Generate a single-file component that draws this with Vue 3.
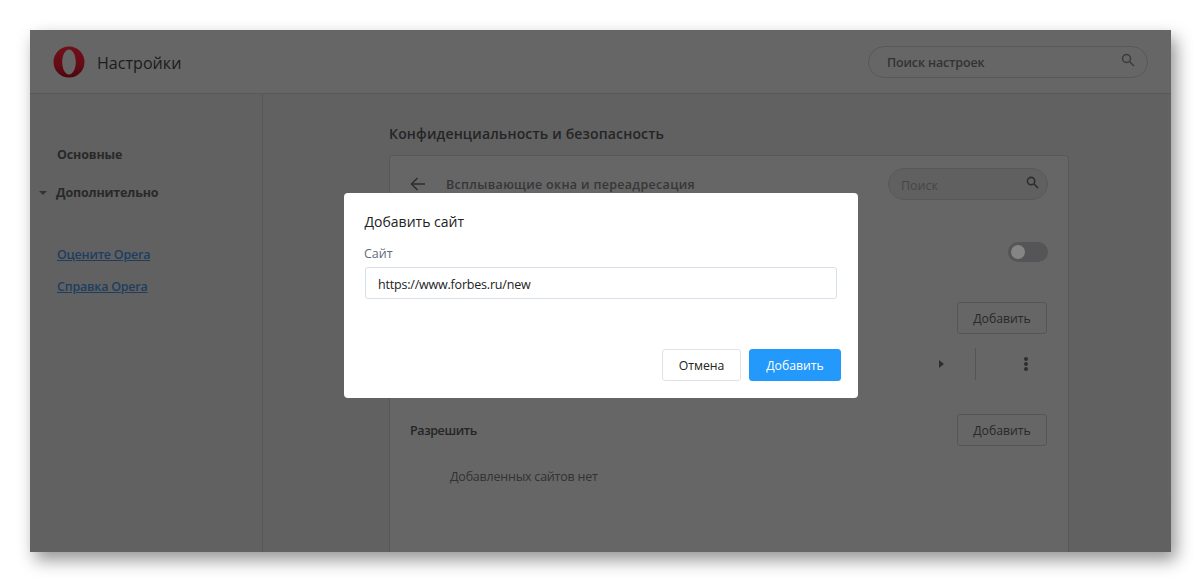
<script setup>
const navLinks = ['Оцените Opera', 'Справка Opera']
</script>

<template>
  <div class="page">
    <div class="window">
      <header class="topbar">
        <svg class="logo" width="32" height="32" viewBox="0 0 32 32">
          <defs>
            <linearGradient id="og" x1="0" y1="0" x2="0" y2="1">
              <stop offset="0" stop-color="#701019" />
              <stop offset="0.6" stop-color="#650c15" />
              <stop offset="1" stop-color="#4a060e" />
            </linearGradient>
          </defs>
          <path fill="url(#og)" fill-rule="evenodd" d="M16 .5a15.500 15.500 0 1 0 0 31 15.500 15.500 0 0 0 0-31zm0 3c3.800 0 6.800 5.600 6.800 12.500S19.800 28.500 16 28.500 9.200 22.900 9.200 16 12.200 3.500 16 3.500z" />
        </svg>
        <span class="app-title">Настройки</span>
        <div class="pill top-search">
          <span>Поиск настроек</span>
          <svg width="14" height="14" viewBox="0 0 14 14" fill="none" stroke="#8f9297" stroke-width="1.5"><circle cx="5.500" cy="5.500" r="4" /><path d="M8.500 8.500 13 13" /></svg>
        </div>
      </header>

      <div class="body">
        <aside class="sidebar">
          <div class="nav-item first">Основные</div>
          <div class="nav-item adv"><i class="caret"></i>Дополнительно</div>
          <div class="links">
            <a v-for="l in navLinks" :key="l" class="link">{{ l }}</a>
          </div>
        </aside>

        <main class="content">
          <h2 class="section">Конфиденциальность и безопасность</h2>
          <section class="card">
            <div class="card-head">
              <svg class="back" width="16" height="14" viewBox="0 0 16 14" fill="none" stroke="#707276" stroke-width="1.500"><path d="M15 7H1.500M7.500 1 1.500 7l6 6" /></svg>
              <span class="card-title">Всплывающие окна и переадресация</span>
              <div class="pill card-search">
                <span>Поиск</span>
                <svg width="13" height="13" viewBox="0 0 14 14" fill="none" stroke="#707276" stroke-width="1.700"><circle cx="5.500" cy="5.500" r="4" /><path d="M8.500 8.500 13 13" /></svg>
              </div>
            </div>
            <div class="row toggle-row">
              <div class="toggle"><i></i></div>
            </div>
            <div class="row add-row">
              <button class="ghost">Добавить</button>
            </div>
            <div class="row site-row">
              <i class="arrow"></i>
              <i class="divider"></i>
              <span class="dots"><i></i><i></i><i></i></span>
            </div>
            <div class="row allow-row">
              <span class="allow">Разрешить</span>
              <button class="ghost">Добавить</button>
            </div>
            <div class="empty">Добавленных сайтов нет</div>
          </section>
        </main>
        <div class="scroll"></div>
      </div>

      <div class="overlay">
        <div class="dialog">
          <div class="d-title">Добавить сайт</div>
          <label class="d-label">Сайт</label>
          <div class="d-input">https://www.forbes.ru/new</div>
          <div class="d-actions">
            <button class="btn cancel">Отмена</button>
            <button class="btn primary">Добавить</button>
          </div>
        </div>
      </div>
    </div>
  </div>
</template>

<style>
html, body { margin: 0; background: #fff; }
</style>

<style scoped>
* { box-sizing: border-box; }
.page {
  width: 1201px;
  height: 582px;
  padding: 30px;
  overflow: hidden;
  background: #fff;
  font-family: "Open Sans", "Noto Sans", sans-serif;
}
.window {
  position: relative;
  width: 1141px;
  height: 522px;
  display: flex;
  flex-direction: column;
  background: #f2f3f6;
  box-shadow: 5px 8px 16px rgba(0, 0, 0, .42);
}
.topbar {
  height: 64px;
  flex: none;
  display: flex;
  align-items: center;
  padding-left: 23px;
  background: #fff;
  border-bottom: 1px solid #dcdfe4;
}
.logo { flex: none; margin-top: 1px; position: relative; z-index: 1; }
.app-title { margin: 2px 0 0 12px; font-size: 16.100px; color: #4a4a4a; }
.pill {
  display: flex;
  align-items: center;
  justify-content: space-between;
  border: 1px solid #dadce0;
  border-radius: 16px;
  height: 32px;
}
.top-search {
  width: 280px;
  margin-left: auto;
  margin-right: 23px;
  padding: 0 12px 0 18px;
  font-size: 12.500px;
  font-weight: 600;
  letter-spacing: -.15px;
  color: #7c7f86;
}
.top-search span { margin-top: 2px; }
.top-search svg { margin-top: -4px; }
.body { flex: 1; display: flex; min-height: 0; position: relative; }
.sidebar {
  width: 233px;
  flex: none;
  border-right: 1px solid #d4d9e1;
  padding: 51px 0 0 27px;
}
.nav-item { font-size: 12.500px; font-weight: 700; letter-spacing: -.17px; color: #666; line-height: 20px; }
.adv { margin-top: 18px; position: relative; margin-left: -1px; }
.caret {
  position: absolute;
  left: -17px;
  top: 8px;
  border-left: 4px solid transparent;
  border-right: 4px solid transparent;
  border-top: 4px solid #808080;
}
.links { margin-top: 42px; display: flex; flex-direction: column; gap: 12px; }
.link { font-size: 12.500px; font-weight: 600; letter-spacing: -.23px; line-height: 20px; color: #4f9cec; text-decoration: underline; }
.content { flex: 1; padding: 30px 0 0 126px; }
.section { margin: 0; font-size: 14px; font-weight: 600; line-height: 20px; color: #5c5c5c; letter-spacing: .16px; }
.card {
  width: 680px;
  height: 397px;
  margin-top: 11px;
  background: #fff;
  border: 1px solid #dcdde0;
  border-bottom: 0;
  border-radius: 4px 4px 0 0;
  padding: 12px 20px 0 20px;
}
.card-head { display: flex; align-items: center; height: 32px; }
.back { margin-right: 20px; }
.card-title { font-size: 12.500px; font-weight: 600; color: #8a8a8a; letter-spacing: .32px; }
.card-search {
  width: 160px;
  margin-left: auto;
  padding: 0 8px 0 12px;
  font-size: 12.500px;
  background: #f0f1f3;
  color: #acafb4;
}
.card-search span { margin-top: 2px; }
.card-search svg { margin-top: -4px; }
.row { display: flex; align-items: center; justify-content: flex-end; }
.toggle-row { margin-top: 42px; height: 20px; }
.toggle { width: 40px; height: 20px; border-radius: 10px; background: #555558; padding: 3px; position: relative; z-index: 1; }
.toggle i { display: block; width: 14px; height: 14px; border-radius: 50%; background: #858585; }
.add-row { margin-top: 40px; height: 32px; }
.ghost {
  width: 90px;
  height: 32px;
  margin: 0 1px 0 0;
  border: 1px solid #d2d4d8;
  border-radius: 3px;
  background: #fff;
  font: 12.250px "Open Sans", "Noto Sans", sans-serif;
  color: #666;
}
.site-row { margin-top: 14px; height: 32px; justify-content: flex-start; padding-left: 529px; }
.arrow {
  border-top: 4px solid transparent;
  border-bottom: 4px solid transparent;
  border-left: 5px solid #747474;
}
.divider { width: 1px; height: 32px; background: #d2d4d8; margin-left: 31px; }
.dots { display: flex; flex-direction: column; gap: 1px; margin-left: 48px; }
.dots i { display: block; width: 4px; height: 4px; border-radius: 50%; background: #747474; }
.allow-row { margin-top: 34px; height: 32px; justify-content: space-between; }
.allow { font-size: 12.500px; font-weight: 600; letter-spacing: -.4px; color: #5c5c5c; }
.empty { margin: 21px 0 0 40px; font-size: 12.500px; letter-spacing: -.22px; line-height: 20px; color: #808080; }
.scroll {
  position: absolute;
  right: 0;
  top: 1px;
  width: 3px;
  height: 402px;
  background: #fff;
  opacity: .35;
}
.overlay {
  position: absolute;
  inset: 0;
  background: rgba(0, 0, 0, .6);
}
.dialog {
  position: absolute;
  left: 314px;
  top: 163px;
  width: 514px;
  height: 205px;
  background: #fff;
  border-radius: 4px;
  padding: 18px 20px 0;
  display: flex;
  flex-direction: column;
}
.d-title { font-size: 14px; line-height: 22px; margin-left: .5px; color: #222; }
.d-label { margin-top: 11px; font-size: 12.500px; line-height: 20px; color: #5f6b7a; }
.d-input {
  width: 472px;
  height: 32px;
  margin: 3px 0 0 1px;
  padding: 1px 12px 0;
  border: 1px solid #d7e0ea;
  border-radius: 3px;
  font-size: 12.500px;
  letter-spacing: -.2px;
  line-height: 31px;
  color: #222;
}
.d-actions {
  display: flex;
  justify-content: flex-end;
  gap: 8px;
  margin: 50px -3px 0 0;
}
.btn {
  height: 32px;
  margin: 0;
  border-radius: 3px;
  font: 12.250px "Open Sans", "Noto Sans", sans-serif;
}
.cancel { width: 79px; background: #fff; border: 1px solid #dfe3e8; color: #222; }
.primary { width: 92px; background: #2299fb; border: 1px solid #2299fb; color: #fff; }
</style>
